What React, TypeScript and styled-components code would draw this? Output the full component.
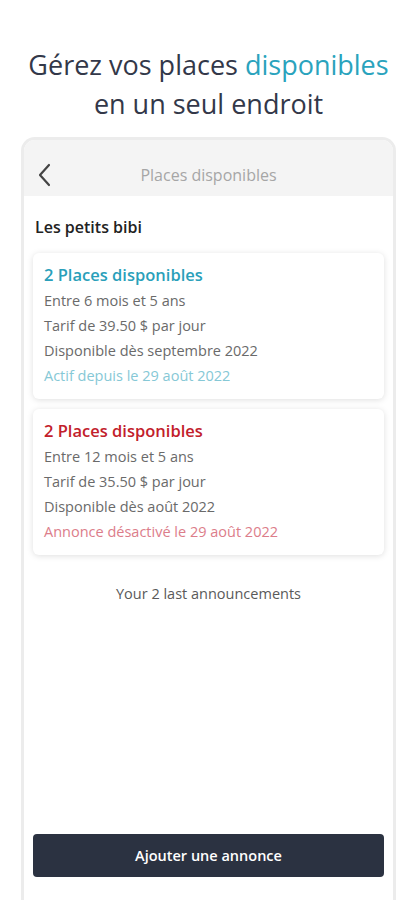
import React from "react";
import styled, { createGlobalStyle } from "styled-components";

const GlobalStyle = createGlobalStyle`
  body {
    margin: 0;
    background: #ffffff;
    font-family: "Open Sans", "Lato", sans-serif;
  }
`;

interface Annonce {
  places: number;
  age: string;
  tarif: string;
  dispo: string;
  status: string;
  active: boolean;
}

const annonces: Annonce[] = [
  {
    places: 2,
    age: "Entre 6 mois et 5 ans",
    tarif: "Tarif de 39.50 $ par jour",
    dispo: "Disponible dès septembre 2022",
    status: "Actif depuis le 29 août 2022",
    active: true,
  },
  {
    places: 2,
    age: "Entre 12 mois et 5 ans",
    tarif: "Tarif de 35.50 $ par jour",
    dispo: "Disponible dès août 2022",
    status: "Annonce désactivé le 29 août 2022",
    active: false,
  },
];

const App = () => {
  return (
    <Page>
      <GlobalStyle />
      <Heading>
        Gérez vos places <Accent>disponibles</Accent>
        <br />
        en un seul endroit
      </Heading>
      <Phone>
        <TopBar>
          <Back>
            <svg width="18" height="24" viewBox="0 0 18 24" fill="none">
              <path
                d="M13 2 L4 12 L13 22"
                stroke="#444"
                strokeWidth="2.2"
                strokeLinecap="round"
                strokeLinejoin="round"
              />
            </svg>
          </Back>
          <TopTitle>Places disponibles</TopTitle>
        </TopBar>
        <Content>
          <Garderie>Les petits bibi</Garderie>
          <CardList>
            {annonces.map((a, i) => (
              <Card key={i}>
                <CardTitle active={a.active}>
                  {a.places} Places disponibles
                </CardTitle>
                <Line>{a.age}</Line>
                <Line>{a.tarif}</Line>
                <Line>{a.dispo}</Line>
                <Status active={a.active}>{a.status}</Status>
              </Card>
            ))}
          </CardList>
          <Footnote>Your 2 last announcements</Footnote>
          <AddButton>Ajouter une annonce</AddButton>
        </Content>
      </Phone>
    </Page>
  );
};

interface StateProps {
  active?: boolean;
}

const Page = styled.div`
  display: flex;
  flex-direction: column;
  align-items: stretch;
  width: 417px;
  height: 900px;
  overflow: hidden;
  padding-top: 45px;
  box-sizing: border-box;
`;

const Heading = styled.h1`
  margin: 0;
  text-align: center;
  font-family: "Open Sans", sans-serif;
  font-weight: 400;
  font-size: 27px;
  line-height: 39px;
  color: #333849;
`;

const Accent = styled.span`
  color: #2aa3bd;
`;

const Phone = styled.div`
  display: flex;
  flex-direction: column;
  flex: 1;
  margin: 14px 21px 0 21px;
  border: 3px solid #ececec;
  border-bottom: none;
  border-radius: 14px 14px 0 0;
  overflow: hidden;
  background: #ffffff;
`;

const TopBar = styled.div`
  position: relative;
  display: flex;
  align-items: center;
  justify-content: center;
  height: 56px;
  padding-top: 14px;
  box-sizing: border-box;
  background: #f4f4f4;
`;

const Back = styled.div`
  position: absolute;
  left: 12px;
  top: 23px;
  display: flex;
`;

const TopTitle = styled.div`
  font-size: 16px;
  color: #a6a6a6;
`;

const Content = styled.div`
  display: flex;
  flex-direction: column;
  flex: 1;
  padding: 0 9px 23px 9px;
`;

const Garderie = styled.div`
  margin: 20px 0 0 2px;
  font-size: 16px;
  font-weight: 600;
  color: #222222;
  line-height: 22px;
`;

const CardList = styled.div`
  display: flex;
  flex-direction: column;
  gap: 10px;
  margin-top: 15px;
`;

const Card = styled.div`
  display: flex;
  flex-direction: column;
  padding: 9px 11px 11px 11px;
  border-radius: 6px;
  background: #ffffff;
  box-shadow: 0 1px 6px rgba(0, 0, 0, 0.13);
`;

const CardTitle = styled.div<StateProps>`
  font-size: 16.5px;
  font-weight: 600;
  line-height: 26px;
  color: ${(props) => (props.active ? "#2a9fba" : "#c2202b")};
`;

const Line = styled.div`
  font-size: 14.5px;
  line-height: 25px;
  color: #6a6a6a;
`;

const Status = styled(Line)<StateProps>`
  color: ${(props) => (props.active ? "#86c8d6" : "#dc7d8a")};
`;

const Footnote = styled.div`
  margin-top: 29px;
  text-align: center;
  font-size: 14.5px;
  line-height: 20px;
  color: #5a5a5a;
`;

const AddButton = styled.button`
  margin-top: auto;
  height: 43px;
  border: none;
  border-radius: 4px;
  background: #2b3241;
  color: #ffffff;
  font-family: "Open Sans", sans-serif;
  font-size: 14.5px;
  font-weight: 600;
  cursor: pointer;
`;

export default App;
